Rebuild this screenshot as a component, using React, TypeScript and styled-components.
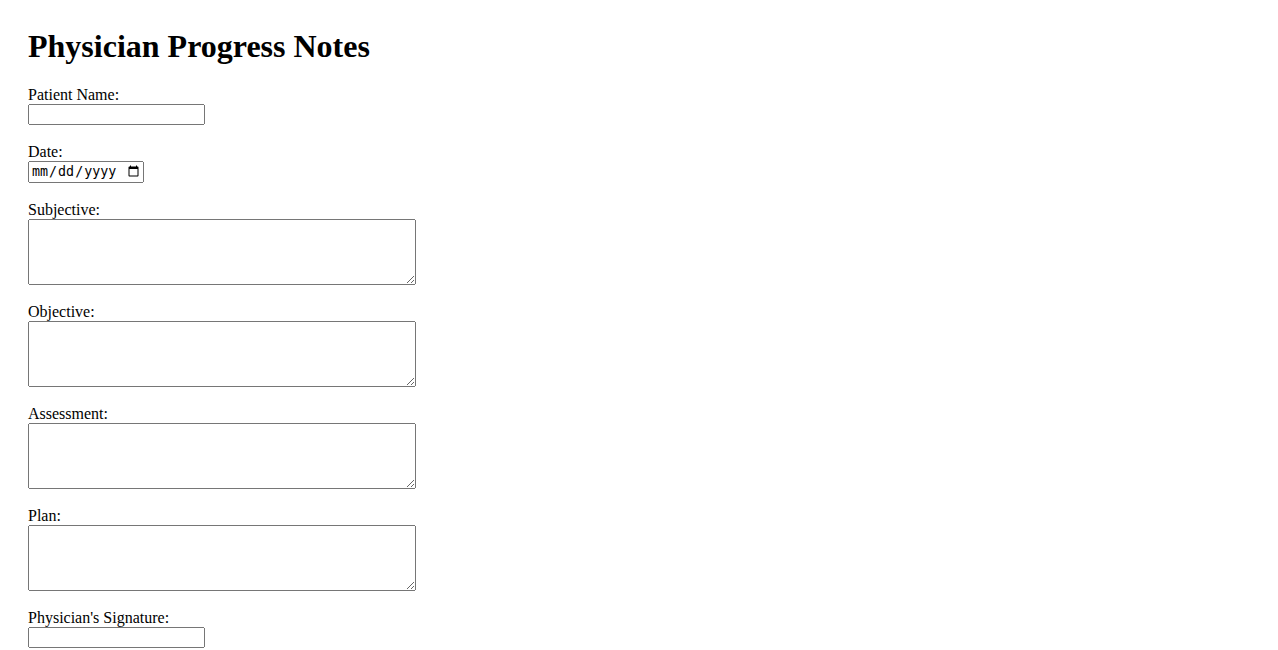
import React from "react";
import styled, { createGlobalStyle } from "styled-components";

const GlobalStyle = createGlobalStyle`
  body {
    margin: 8px;
    font-family: "Liberation Serif", "Times New Roman", serif;
    font-size: 16px;
    color: #000;
    background: #fff;
  }
`;

const Page = styled.div`
  padding: 20px;
`;

const Title = styled.h1`
  font-size: 32px;
  font-weight: bold;
  margin: 0 0 21px 0;
  line-height: 37px;
`;

const Form = styled.form`
  display: flex;
  flex-direction: column;
  align-items: flex-start;
`;

const Field = styled.div`
  display: flex;
  flex-direction: column;
  align-items: flex-start;
  margin-bottom: 18px;
`;

const Label = styled.label`
  display: block;
  line-height: 18px;
`;

const TextInput = styled.input`
  display: block;
  box-sizing: border-box;
  width: 177px;
  height: 21px;
  margin: 0;
  font-family: "Liberation Sans", Arial, sans-serif;
  font-size: 13.33px;
`;

const DateInput = styled.input`
  display: block;
  box-sizing: border-box;
  width: 116px;
  height: 22px;
  margin: 0;
  font-size: 13.33px;
`;

const Area = styled.textarea`
  display: block;
  box-sizing: border-box;
  width: 388px;
  height: 66px;
  margin: 0;
  font-family: "Liberation Mono", monospace;
  font-size: 13.33px;
`;

const areas = ["Subjective", "Objective", "Assessment", "Plan"];

export default function App() {
  return (
    <Page>
      <GlobalStyle />
      <Title>Physician Progress Notes</Title>
      <Form>
        <Field>
          <Label htmlFor="patientName">Patient Name:</Label>
          <TextInput id="patientName" type="text" />
        </Field>
        <Field>
          <Label htmlFor="date">Date:</Label>
          <DateInput id="date" type="date" />
        </Field>
        {areas.map((a) => (
          <Field key={a}>
            <Label htmlFor={a}>{a}:</Label>
            <Area id={a} />
          </Field>
        ))}
        <Field>
          <Label htmlFor="signature">Physician's Signature:</Label>
          <TextInput id="signature" type="text" />
        </Field>
      </Form>
    </Page>
  );
}
